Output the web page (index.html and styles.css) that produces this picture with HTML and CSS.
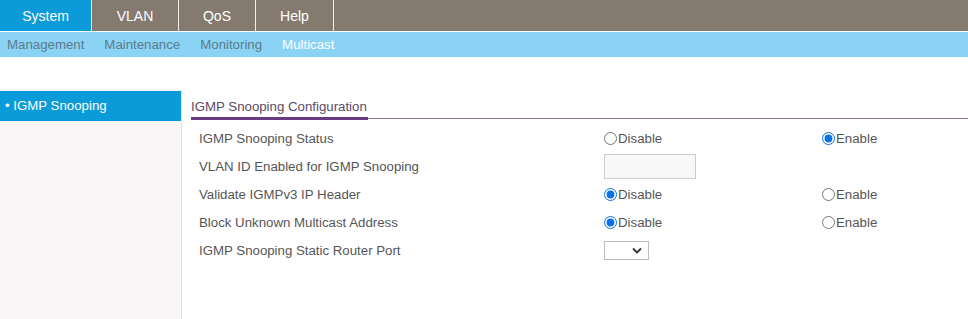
FILE: index.html
```html
<!DOCTYPE html>
<html lang="en">
<head>
    <meta charset="UTF-8">
    <title>IGMP Snooping Configuration</title>
    <link rel="stylesheet" href="styles.css">
</head>
<body>
    <div class="topnav">
        <a class="tab active">System</a>
        <a class="tab">VLAN</a>
        <a class="tab">QoS</a>
        <a class="tab">Help</a>
    </div>
    <div class="subnav">
        <a class="sub-item">Management</a>
        <a class="sub-item">Maintenance</a>
        <a class="sub-item">Monitoring</a>
        <a class="sub-item active">Multicast</a>
    </div>

    <div class="main">
        <div class="sidebar">
            <div class="side-item active">&bull; IGMP Snooping</div>
        </div>

        <div class="content">
            <div class="section-title">
                <span>IGMP Snooping Configuration</span>
            </div>

            <div class="form-grid">
                <div class="label">IGMP Snooping Status</div>
                <label class="opt"><input type="radio" name="status">Disable</label>
                <label class="opt"><input type="radio" name="status" checked>Enable</label>

                <div class="label">VLAN ID Enabled for IGMP Snooping</div>
                <div class="opt wide"><input type="text" class="text-box"></div>

                <div class="label">Validate IGMPv3 IP Header</div>
                <label class="opt"><input type="radio" name="v3" checked>Disable</label>
                <label class="opt"><input type="radio" name="v3">Enable</label>

                <div class="label">Block Unknown Multicast Address</div>
                <label class="opt"><input type="radio" name="block" checked>Disable</label>
                <label class="opt"><input type="radio" name="block">Enable</label>

                <div class="label">IGMP Snooping Static Router Port</div>
                <div class="opt wide">
                    <div class="select-box">
                        <svg width="10" height="7" viewBox="0 0 10 7"><path d="M1 1.5 L5 5.5 L9 1.5" fill="none" stroke="#333" stroke-width="1.8"/></svg>
                    </div>
                </div>
            </div>
        </div>
    </div>
</body>
</html>
```

FILE: styles.css
```css
body {
    margin: 0;
    font-family: 'Liberation Sans', Arial, sans-serif;
    font-size: 13.25px;
    color: #555;
    background-color: #fff;
}

.topnav {
    display: flex;
    height: 31px;
    background-color: #857a70;
}

.tab {
    display: flex;
    align-items: center;
    justify-content: center;
    color: #fff;
    font-size: 14px;
    border-right: 1px solid #f2f0ee;
}

.tab:nth-child(1) { width: 91px; }
.tab:nth-child(2) { width: 86px; }
.tab:nth-child(3) { width: 76px; }
.tab:nth-child(4) { width: 77px; }

.tab.active {
    background-color: #0c9bd9;
}

.subnav {
    display: flex;
    gap: 20px;
    height: 25px;
    margin-top: 1px;
    padding-left: 7px;
    align-items: center;
    background-color: #8bd3f4;
}

.sub-item {
    color: #5a7b8c;
}

.sub-item.active {
    color: #fff;
}

.main {
    display: flex;
    margin-top: 33px;
    min-height: 229px;
}

.sidebar {
    width: 181px;
    background-color: #f8f6f6;
    border-right: 1px solid #e6e2e2;
    padding-top: 1px;
}

.side-item {
    height: 30px;
    line-height: 30px;
    padding-left: 5px;
}

.side-item.active {
    background-color: #0c9bd9;
    color: #fff;
}

.content {
    flex: 1;
    padding-left: 9px;
}

.section-title {
    border-bottom: 1px solid #8c7a98;
    height: 29px;
    box-sizing: border-box;
    display: flex;
    align-items: flex-end;
}

.section-title span {
    display: inline-block;
    color: #5a4a66;
    padding: 0 1px 3px 0;
    margin-bottom: -2px;
    border-bottom: 3px solid #6a3b82;
}

.form-grid {
    display: grid;
    grid-template-columns: 405px 218px 1fr;
    grid-auto-rows: 28px;
    margin-top: 5px;
    padding-left: 8px;
}

.label {
    display: flex;
    align-items: center;
}

.opt {
    display: flex;
    align-items: center;
}

.opt.wide {
    grid-column: 2 / 4;
}

.opt input[type="radio"] {
    margin: 0 1px 0 0;
    width: 13px;
    height: 13px;
    accent-color: #0b72e6;
}

.text-box {
    width: 92px;
    height: 25px;
    box-sizing: border-box;
    border: 1px solid #ccc;
    background-color: #f8f8f8;
    margin: 0;
}

.select-box {
    width: 45px;
    height: 19px;
    box-sizing: border-box;
    border: 1px solid #bbb;
    display: flex;
    align-items: center;
    justify-content: flex-end;
    padding-right: 6px;
    background-color: #fff;
}
```
